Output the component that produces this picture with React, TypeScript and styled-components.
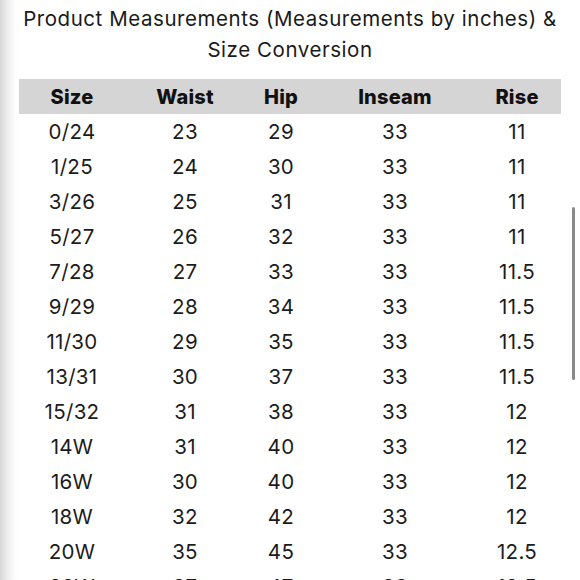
import styled, { createGlobalStyle } from "styled-components";

const GlobalStyle = createGlobalStyle`
  html, body {
    margin: 0;
    padding: 0;
    background: #fff;
    overflow: hidden;
  }
`;

const Page = styled.div`
  position: relative;
  width: 580px;
  height: 580px;
  overflow: hidden;
  background: linear-gradient(
    to right,
    #d6d6d6 0px,
    #ececec 7px,
    #fbfbfb 14px,
    #ffffff 18px
  );
  font-family: Inter, "Liberation Sans", sans-serif;
  color: #141414;
`;

const Title = styled.h1`
  margin: 0;
  padding-top: 3px;
  text-align: center;
  font-size: 20.5px;
  font-weight: 400;
  line-height: 31px;
  letter-spacing: 0.55px;
  color: #1a1a1a;
`;

const Table = styled.div`
  margin: 14px 0 0 19px;
  width: 542px;
`;

const Row = styled.div<{ $head?: boolean }>`
  display: grid;
  grid-template-columns: 106px 120px 72px 156px 88px;
  height: 35px;
  align-items: center;
  background: ${(p) => (p.$head ? "#d5d5d5" : "transparent")};
  font-weight: ${(p) => (p.$head ? 800 : 400)};
  font-size: ${(p) => (p.$head ? "20px" : "20.5px")};
  letter-spacing: ${(p) => (p.$head ? "0.2px" : "0.3px")};
  color: ${(p) => (p.$head ? "#111" : "#1c1c1c")};
`;

const Cell = styled.div`
  text-align: center;
  white-space: nowrap;
`;

const Scrollbar = styled.div`
  position: absolute;
  right: 5px;
  top: 207px;
  width: 3px;
  height: 173px;
  border-radius: 2px;
  background: #8a8a8a;
`;

const columns = ["Size", "Waist", "Hip", "Inseam", "Rise"];

const rows = [
  ["0/24", "23", "29", "33", "11"],
  ["1/25", "24", "30", "33", "11"],
  ["3/26", "25", "31", "33", "11"],
  ["5/27", "26", "32", "33", "11"],
  ["7/28", "27", "33", "33", "11.5"],
  ["9/29", "28", "34", "33", "11.5"],
  ["11/30", "29", "35", "33", "11.5"],
  ["13/31", "30", "37", "33", "11.5"],
  ["15/32", "31", "38", "33", "12"],
  ["14W", "31", "40", "33", "12"],
  ["16W", "30", "40", "33", "12"],
  ["18W", "32", "42", "33", "12"],
  ["20W", "35", "45", "33", "12.5"],
  ["22W", "37", "47", "33", "12.5"],
];

export default function App() {
  return (
    <Page>
      <GlobalStyle />
      <Title>
        Product Measurements (Measurements by inches) &amp;
        <br />
        Size Conversion
      </Title>
      <Table>
        <Row $head>
          {columns.map((c) => (
            <Cell key={c}>{c}</Cell>
          ))}
        </Row>
        {rows.map((r) => (
          <Row key={r[0]}>
            {r.map((v, i) => (
              <Cell key={i}>{v}</Cell>
            ))}
          </Row>
        ))}
      </Table>
      <Scrollbar />
    </Page>
  );
}
